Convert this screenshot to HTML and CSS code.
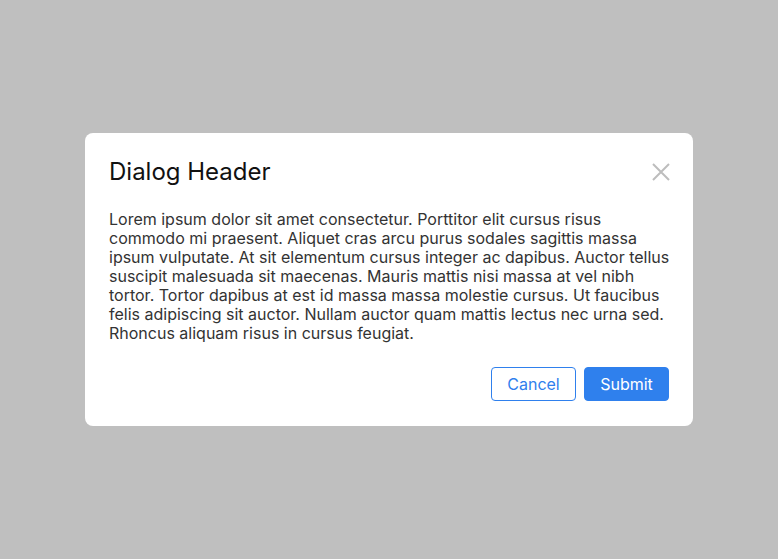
FILE: index.html
```html
<!DOCTYPE html>
<html lang="en">
<head>
<meta charset="utf-8">
<title>Dialog</title>
<link rel="stylesheet" href="styles.css">
</head>
<body>
<div class="backdrop">
  <div class="dialog" role="dialog">
    <div class="dialog-header">
      <h2 class="dialog-title">Dialog Header</h2>
      <button class="close" aria-label="Close">
        <svg width="18" height="18" viewBox="0 0 18 18"><path d="M1 1L17 17M17 1L1 17" stroke="#bdbdbd" stroke-width="2" fill="none"/></svg>
      </button>
    </div>
    <p class="dialog-body">Lorem ipsum dolor sit amet consectetur. Porttitor elit cursus risus commodo mi praesent. Aliquet cras arcu purus sodales sagittis massa ipsum vulputate. At sit elementum cursus integer ac dapibus. Auctor tellus suscipit malesuada sit maecenas. Mauris mattis nisi massa at vel nibh tortor. Tortor dapibus at est id massa massa molestie cursus. Ut faucibus felis adipiscing sit auctor. Nullam auctor quam mattis lectus nec urna sed. Rhoncus aliquam risus in cursus feugiat.</p>
    <div class="dialog-footer">
      <button class="btn btn-outline">Cancel</button>
      <button class="btn btn-primary">Submit</button>
    </div>
  </div>
</div>
</body>
</html>
```

FILE: styles.css
```css
html, body {
  margin: 0;
  padding: 0;
}
body {
  font-family: Inter, "Noto Sans", sans-serif;
  background: #bfbfbf;
}
.backdrop {
  width: 778px;
  height: 559px;
  display: flex;
  align-items: center;
  justify-content: center;
}
.dialog {
  width: 608px;
  box-sizing: border-box;
  background: #fff;
  border-radius: 8px;
  padding: 24px 24px 25px;
}
.dialog-header {
  display: flex;
  align-items: center;
  justify-content: space-between;
}
.dialog-title {
  margin: 0;
  font-size: 24px;
  font-weight: 400;
  line-height: 29px;
  color: #111;
}
.close {
  border: 0;
  background: none;
  padding: 0;
  margin-right: -1px;
  width: 18px;
  height: 18px;
  display: flex;
}
.dialog-body {
  margin: 24px -8px 0 0;
  font-size: 16px;
  line-height: 19px;
  color: #333;
}
.dialog-footer {
  margin-top: 24px;
  display: flex;
  justify-content: flex-end;
  gap: 8px;
}
.btn {
  width: 85px;
  height: 34px;
  box-sizing: border-box;
  border-radius: 4px;
  font-family: Inter, "Noto Sans", sans-serif;
  font-size: 16px;
  padding: 0;
}
.btn-outline {
  background: #fff;
  border: 1px solid #2f80ed;
  color: #2f80ed;
}
.btn-primary {
  background: #2f80ed;
  border: 1px solid #2f80ed;
  color: #fff;
}
```
